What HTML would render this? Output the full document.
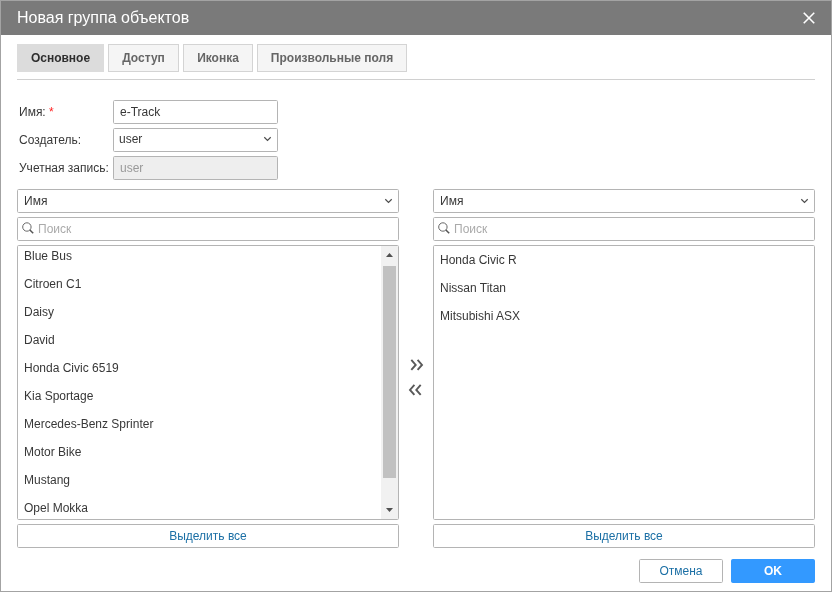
<!DOCTYPE html>
<html><head><meta charset="utf-8">
<style>
*{box-sizing:border-box;margin:0;padding:0}
html,body{width:832px;height:592px;overflow:hidden;background:#fff}
body{font-family:"Liberation Sans",sans-serif;font-size:12px;color:#383838;position:relative}
.dlg{position:absolute;left:0;top:0;width:832px;height:592px;border:1px solid #a3a3a3;background:#fff}
.hdr{position:absolute;left:1px;top:1px;width:830px;height:34px;background:#7a7a7a}
.ttl{position:absolute;left:17px;top:9px;font-size:16px;line-height:18px;color:#fff;white-space:nowrap}
.abs{position:absolute}
.tab{position:absolute;top:44px;height:28px;border:1px solid #d4d4d4;background:#f5f5f5;color:#666;font-weight:bold;font-size:12px;line-height:26px;text-align:center;white-space:nowrap}
.tab.act{background:#dcdcdc;border-color:#dcdcdc;color:#2e2e2e}
.hr{position:absolute;left:17px;top:79px;width:798px;height:1px;background:#d0d0d0}
.lbl{position:absolute;left:19px;font-size:12px;line-height:14px;white-space:nowrap;color:#383838}
.inp{position:absolute;height:24px;border:1px solid #b4b4b4;border-radius:1.6px;background:#fff;font-size:12px;line-height:22px;padding-left:6px;color:#383838;white-space:nowrap}
.inp.dis{background:#eee;color:#999}
.list{position:absolute;top:245px;height:275px;border:1px solid #b4b4b4;border-radius:1.6px;background:#fff;overflow:hidden}
.it{position:absolute;left:6px;height:28px;line-height:28px;font-size:12px;color:#383838;white-space:nowrap}
.btn{position:absolute;height:24px;border:1px solid #b4b4b4;border-radius:1.6px;background:#fff;color:#1b6fa5;text-align:center;line-height:22px;font-size:12px;white-space:nowrap}
.ph{color:#aaa}
svg{position:absolute;overflow:visible}
</style></head><body>
<div class="dlg"></div>
<div id="wrap" style="position:absolute;left:0;top:0;width:832px;height:592px;will-change:transform">
<div class="hdr"></div>
<div class="ttl">Новая группа объектов</div>
<svg style="left:804px;top:13px" width="10" height="10" viewBox="0 0 10 10"><path d="M0.3 0.3 L9.7 9.7 M9.7 0.3 L0.3 9.7" stroke="#fff" stroke-width="1.6" stroke-linecap="square" fill="none"/></svg>

<div class="tab act" style="left:17px;width:87px">Основное</div>
<div class="tab" style="left:108px;width:71px">Доступ</div>
<div class="tab" style="left:183px;width:70px">Иконка</div>
<div class="tab" style="left:257px;width:150px">Произвольные поля</div>
<div class="hr"></div>

<div class="lbl" style="top:105px">Имя: <span style="color:#f22">*</span></div>
<div class="lbl" style="top:133px">Создатель:</div>
<div class="lbl" style="top:161px">Учетная запись:</div>
<div class="inp" style="left:113px;top:100px;width:165px">e-Track</div>
<div class="inp" style="left:113px;top:128px;width:165px;padding-left:5px;line-height:20px">user</div>
<svg style="left:264px;top:137px" width="7" height="4" viewBox="0 0 7 4"><path d="M0.3 0.3 L3.5 3.4 L6.7 0.3" stroke="#4c4c4c" stroke-width="1.2" fill="none"/></svg>
<div class="inp dis" style="left:113px;top:156px;width:165px">user</div>

<!-- left column -->
<div class="inp" style="left:17px;top:189px;width:382px">Имя</div>
<svg style="left:385px;top:199px" width="7" height="4" viewBox="0 0 7 4"><path d="M0.3 0.3 L3.5 3.4 L6.7 0.3" stroke="#4c4c4c" stroke-width="1.2" fill="none"/></svg>
<div class="inp" style="left:17px;top:217px;width:382px;padding-left:20px"><span class="ph">Поиск</span></div>
<svg style="left:22px;top:222px" width="12" height="12" viewBox="0 0 12 12"><circle cx="4.9" cy="5" r="4.2" stroke="#666" stroke-width="1" fill="none"/><path d="M7.9 8 L11.2 11.3" stroke="#555" stroke-width="1.5" fill="none"/></svg>
<div class="list" style="left:17px;width:382px">
  <div class="it" style="top:-4px">Blue Bus</div>
  <div class="it" style="top:24px">Citroen C1</div>
  <div class="it" style="top:52px">Daisy</div>
  <div class="it" style="top:80px">David</div>
  <div class="it" style="top:108px">Honda Civic 6519</div>
  <div class="it" style="top:136px">Kia Sportage</div>
  <div class="it" style="top:164px">Mercedes-Benz Sprinter</div>
  <div class="it" style="top:192px">Motor Bike</div>
  <div class="it" style="top:220px">Mustang</div>
  <div class="it" style="top:248px">Opel Mokka</div>
  <div class="abs" style="left:363px;top:0;width:17px;height:273px;background:#f1f1f1"></div>
  <div class="abs" style="left:365px;top:20px;width:13px;height:212px;background:#c1c1c1"></div>
  <svg style="left:368px;top:7px" width="7" height="4" viewBox="0 0 7 4"><path d="M0 4 L3.5 0 L7 4 Z" fill="#505050"/></svg>
  <svg style="left:368px;top:262px" width="7" height="4" viewBox="0 0 7 4"><path d="M0 0 L3.5 4 L7 0 Z" fill="#505050"/></svg>
</div>
<div class="btn" style="left:17px;top:524px;width:382px">Выделить все</div>

<!-- middle arrows -->
<svg style="left:410px;top:359px" width="13" height="12" viewBox="0 0 13 12"><path d="M1.3 0.9 L5.7 5.9 L1.3 10.9 M7.6 0.9 L12 5.9 L7.6 10.9" stroke="#595959" stroke-width="1.9" fill="none"/></svg>
<svg style="left:409px;top:384px" width="13" height="12" viewBox="0 0 13 12"><path d="M5.4 0.9 L1 5.9 L5.4 10.9 M11.7 0.9 L7.3 5.9 L11.7 10.9" stroke="#595959" stroke-width="1.9" fill="none"/></svg>

<!-- right column -->
<div class="inp" style="left:433px;top:189px;width:382px">Имя</div>
<svg style="left:801px;top:199px" width="7" height="4" viewBox="0 0 7 4"><path d="M0.3 0.3 L3.5 3.4 L6.7 0.3" stroke="#4c4c4c" stroke-width="1.2" fill="none"/></svg>
<div class="inp" style="left:433px;top:217px;width:382px;padding-left:20px"><span class="ph">Поиск</span></div>
<svg style="left:438px;top:222px" width="12" height="12" viewBox="0 0 12 12"><circle cx="4.9" cy="5" r="4.2" stroke="#666" stroke-width="1" fill="none"/><path d="M7.9 8 L11.2 11.3" stroke="#555" stroke-width="1.5" fill="none"/></svg>
<div class="list" style="left:433px;width:382px">
  <div class="it" style="top:0px">Honda Civic R</div>
  <div class="it" style="top:28px">Nissan Titan</div>
  <div class="it" style="top:56px">Mitsubishi ASX</div>
</div>
<div class="btn" style="left:433px;top:524px;width:382px">Выделить все</div>

<div class="btn" style="left:639px;top:559px;width:84px">Отмена</div>
<div class="btn" style="left:731px;top:559px;width:84px;background:#3399ff;border-color:#3399ff;color:#fff;font-weight:bold">OK</div>
</div>
</body></html>
